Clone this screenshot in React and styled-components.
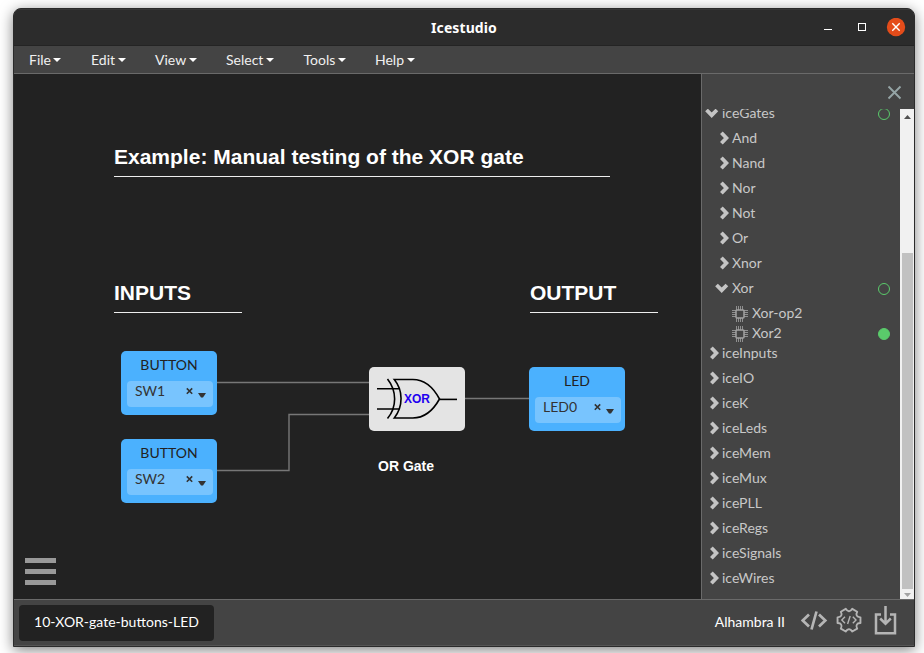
import React from "react";
import styled, { createGlobalStyle } from "styled-components";

const Global = createGlobalStyle`
  * { box-sizing: border-box; }
  html, body { margin: 0; height: 100%; background: #fff; overflow: hidden; }
  body { font-family: Lato, sans-serif; font-size: 14px; line-height: 20px; }
  svg { display: block; flex: none; }
`;

const Desktop = styled.div`
  width: 924px;
  height: 653px;
  padding: 8px 9px 6px 13px;
  overflow: hidden;
`;

const Window = styled.div`
  height: 639px;
  display: flex;
  flex-direction: column;
  border: 1px solid #2b2b2b;
  border-radius: 8px 8px 0 0;
  background: #444;
  box-shadow: 0 3px 14px rgba(0, 0, 0, 0.5);
  overflow: hidden;
`;

const TitleBar = styled.header`
  height: 37px;
  flex: none;
  display: grid;
  grid-template-columns: 1fr auto 1fr;
  align-items: center;
  background: #2c2c2c;
  border-top: 1px solid #383838;
  border-bottom: 1px solid #242424;
`;

const Title = styled.h1`
  grid-column: 2;
  margin: 0;
  font: bold 14px/20px "Noto Sans", sans-serif;
  letter-spacing: 0.1px;
  color: #fff;
`;

const WindowControls = styled.div`
  display: flex;
  justify-content: flex-end;
  padding-right: 8px;
`;

const MenuBar = styled.nav`
  height: 28px;
  flex: none;
  display: flex;
  align-items: center;
  gap: 30px;
  padding-left: 15px;
  background: #444;
  border-bottom: 1px solid #6a6a6a;
`;

const MenuItem = styled.div`
  display: flex;
  align-items: center;
  gap: 2.5px;
  width: ${(p) => p.$width}px;
  color: #f0f0f0;
  white-space: nowrap;
`;

const Body = styled.main`
  height: 525px;
  flex: none;
  display: flex;
`;

const Canvas = styled.section`
  position: relative;
  flex: 1;
  background: #222;
`;

const Wires = styled.svg`
  position: absolute;
  left: 0;
  top: 0;
`;

const Heading = styled.h2`
  position: absolute;
  left: ${(p) => p.$x}px;
  top: ${(p) => p.$y}px;
  width: ${(p) => p.$width}px;
  height: 34px;
  margin: 0;
  border-bottom: 1px solid #eee;
  font: bold 21px/28px "Liberation Sans", Arial, sans-serif;
  color: #fff;
  white-space: nowrap;
`;

const Caption = styled.div`
  position: absolute;
  left: 364px;
  top: 382px;
  font: bold 14px/20px "Liberation Sans", Arial, sans-serif;
  color: #fff;
`;

const Block = styled.div`
  position: absolute;
  left: ${(p) => p.$x}px;
  top: ${(p) => p.$y}px;
  width: 96px;
  height: 64px;
  border-radius: 5px;
  background: ${(p) => (p.$gate ? "#e4e4e4" : "#4bb1fe")};
`;

const BlockLabel = styled.div`
  height: 30px;
  padding-top: 4px;
  text-align: center;
  color: #222;
`;

const PinSelect = styled.div`
  height: 26px;
  margin: 0 4px 0 6px;
  padding: 0 6px 0 8px;
  display: flex;
  border-radius: 4px;
  background: #78c4fe;
  color: #333;
  line-height: 20px;
`;

const PinName = styled.span`
  flex: 1;
`;

const MenuButton = styled.div`
  position: absolute;
  left: 11px;
  bottom: 14px;
  width: 31px;
  display: grid;
  gap: 6px;
`;

const Bar = styled.span`
  height: 5px;
  background: #999;
`;

const Panel = styled.aside`
  width: 213px;
  flex: none;
  display: flex;
  flex-direction: column;
  background: #444;
  border-left: 1px solid #6a6a6a;
`;

const PanelHeader = styled.div`
  height: 35px;
  flex: none;
  display: flex;
  justify-content: flex-end;
  padding: 10.5px 12.5px 0 0;
`;

const TreeArea = styled.div`
  flex: 1;
  min-height: 0;
  display: flex;
`;

const TreeClip = styled.div`
  flex: 1;
  overflow: hidden;
`;

const Tree = styled.div`
  margin-top: -6px;
`;

const TreeRow = styled.div`
  height: 20px;
  margin-bottom: ${(p) => (p.$leaf ? 0 : 5)}px;
  padding-left: ${(p) => p.$depth * 10}px;
  padding-right: 10px;
  display: flex;
  align-items: center;
  color: #c8c8c8;
`;

const RowIcon = styled.span`
  width: 20px;
  flex: none;
  display: flex;
  justify-content: flex-end;
  padding-right: ${(p) => (p.$leaf ? 4 : 3)}px;
  padding-top: ${(p) => (p.$leaf ? 1 : 0)}px;
`;

const RowName = styled.span`
  flex: 1;
`;

const Dot = styled.span`
  width: 12px;
  height: 12px;
  margin-top: 2px;
  border: 1px solid #5acb6b;
  border-radius: 50%;
  background: ${(p) => (p.$filled ? "#5acb6b" : "transparent")};
`;

const ScrollTrack = styled.div`
  width: 14px;
  display: flex;
  flex-direction: column;
  align-items: center;
  background: #f1f1f1;
`;

const ScrollArrow = styled.div`
  height: ${(p) => p.$height}px;
  flex: none;
  display: flex;
  align-items: center;
`;

const ScrollThumb = styled.div`
  width: 11px;
  height: 336px;
  flex: none;
  margin-top: 129px;
  background: #c1c1c1;
`;

const Footer = styled.footer`
  height: 47px;
  flex: none;
  display: flex;
  padding: 5px 17px 0 5px;
  border-top: 1px solid #6a6a6a;
  border-bottom: 1px solid #555;
  background: #444;
  color: #fff;
`;

const ProjectTab = styled.div`
  width: 195px;
  height: 36px;
  border-radius: 4px;
  background: #222;
  text-align: center;
  line-height: 33px;
`;

const Board = styled.span`
  margin-left: auto;
  margin-right: 16px;
  line-height: 33px;
`;

const Tools = styled.div`
  display: flex;
`;

const MenuCaret = () => (
  <svg width="8" height="5" viewBox="0 0 8 5">
    <path d="M0 1h8L4 5z" fill="#fff" />
  </svg>
);

const Chevron = ({ open }) =>
  open ? (
    <svg width="14" height="12" viewBox="0 0 14 12">
      <path d="M1.500 3l5.200 5.200L11.900 3" fill="none" stroke="#c4c4c4" strokeWidth="3.800" />
    </svg>
  ) : (
    <svg width="9" height="14" viewBox="0 0 9 14">
      <path d="M1.400 1.800l5 5.200-5 5.200" fill="none" stroke="#c4c4c4" strokeWidth="3.800" />
    </svg>
  );

const Chip = () => (
  <svg width="16" height="16" viewBox="0 0 16 16" fill="none" stroke="#a2a2a2">
    <path d="M4.500 0v4M6.500 0v4M8.500 0v4M10.500 0v4M4.500 12v4M6.500 12v4M8.500 12v4M10.500 12v4M0 4.500h4M0 6.500h4M0 8.500h4M0 10.500h4M12 4.500h4M12 6.500h4M12 8.500h4M12 10.500h4" strokeWidth=".8" />
    <rect x="4" y="4" width="8" height="8" rx="1" strokeWidth="1.500" />
  </svg>
);

const PinMarks = () => (
  <svg width="22" height="26" viewBox="0 0 22 26">
    <path d="M1.800 7.400l5.400 5.400M7.200 7.400l-5.400 5.400" stroke="#333" strokeWidth="1.600" />
    <path d="M13 12h8l-3 4.500h-2z" fill="#333" />
  </svg>
);

const PinBlock = ({ x, y, label, pin }) => (
  <Block $x={x} $y={y}>
    <BlockLabel>{label}</BlockLabel>
    <PinSelect>
      <PinName>{pin}</PinName>
      <PinMarks />
    </PinSelect>
  </Block>
);

const gearPath = (cx, cy, outer, inner) => {
  const at = (r, deg) => {
    const a = (deg * Math.PI) / 180;
    return `${(cx + r * Math.cos(a)).toFixed(2)} ${(cy + r * Math.sin(a)).toFixed(2)}`;
  };
  const lobes = [0, 60, 120, 180, 240, 300].map(
    (d) => `${at(outer, d - 14)} L${at(outer, d + 14)} Q${at(inner, d + 19)} ${at(inner, d + 30)} Q${at(inner, d + 41)} `
  );
  return `M${lobes.join("")}${at(outer, -14)}Z`;
};

const menus = [
  ["File", 32],
  ["Edit", 34],
  ["View", 41],
  ["Select", 47.5],
  ["Tools", 41.5],
  ["Help", 40],
];

const tree = [
  { name: "iceGates", depth: 0, open: true, dot: "ring" },
  { name: "And", depth: 1 },
  { name: "Nand", depth: 1 },
  { name: "Nor", depth: 1 },
  { name: "Not", depth: 1 },
  { name: "Or", depth: 1 },
  { name: "Xnor", depth: 1 },
  { name: "Xor", depth: 1, open: true, dot: "ring" },
  { name: "Xor-op2", depth: 3, leaf: true },
  { name: "Xor2", depth: 3, leaf: true, dot: "filled" },
  ...["iceInputs", "iceIO", "iceK", "iceLeds", "iceMem", "iceMux", "icePLL", "iceRegs", "iceSignals", "iceWires"].map(
    (name) => ({ name, depth: 0 })
  ),
];

export default function App() {
  return (
    <Desktop>
      <Global />
      <Window>
        <TitleBar>
          <Title>Icestudio</Title>
          <WindowControls>
            <svg width="84" height="20" viewBox="0 0 84 20">
              <path d="M2 11.500h8" stroke="#fff" />
              <rect x="36.500" y="5.500" width="7" height="7" fill="none" stroke="#fff" />
              <circle cx="74" cy="9" r="9.200" fill="#e44c1a" />
              <path d="M70.300 5.300l7.400 7.400M77.700 5.300l-7.400 7.400" stroke="#fff" strokeWidth="1.400" />
            </svg>
          </WindowControls>
        </TitleBar>
        <MenuBar>
          {menus.map(([name, width]) => (
            <MenuItem key={name} $width={width}>
              {name}
              <MenuCaret />
            </MenuItem>
          ))}
        </MenuBar>
        <Body>
          <Canvas>
            <Wires width="687" height="525" viewBox="0 0 687 525" fill="none" stroke="#777" strokeWidth="1.400">
              <path d="M203 308.500h152M203 396.500h72v-56h80M451 324.500h64" />
            </Wires>
            <Heading $x={100} $y={69} $width={496}>Example: Manual testing of the XOR gate</Heading>
            <Heading $x={100} $y={205} $width={128}>INPUTS</Heading>
            <Heading $x={516} $y={205} $width={128}>OUTPUT</Heading>
            <PinBlock x={107} y={277} label="BUTTON" pin="SW1" />
            <PinBlock x={107} y={365} label="BUTTON" pin="SW2" />
            <PinBlock x={515} y={293} label="LED" pin="LED0" />
            <Block $gate $x={355} $y={293}>
              <svg width="96" height="64" viewBox="0 0 96 64" fill="none" stroke="#000" strokeWidth="1.600">
                <path d="M8 21.700h22M8 42h22" />
                <path d="M18.500 12c9.500 12 9.500 28 0 39.500" />
                <path d="M25.300 12.500c9 11 9 27 0 38.500h18.500c11 0 20-7 26.700-19-6.700-12.500-15.700-19.500-26.700-19.500z" />
                <path d="M70.500 32.400H88" />
                <text x="35" y="36" fill="#2200f0" stroke="none" fontFamily="Liberation Sans, Arial, sans-serif" fontSize="12" fontWeight="bold">XOR</text>
              </svg>
            </Block>
            <Caption>OR Gate</Caption>
            <MenuButton>
              <Bar />
              <Bar />
              <Bar />
            </MenuButton>
          </Canvas>
          <Panel>
            <PanelHeader>
              <svg width="15" height="15" viewBox="0 0 15 15">
                <path d="M1.500 1.500l12 12M13.500 1.500l-12 12" stroke="#95a5a6" strokeWidth="1.900" />
              </svg>
            </PanelHeader>
            <TreeArea>
              <TreeClip>
                <Tree>
                  {tree.map((row) => (
                    <TreeRow key={row.name} $depth={row.depth} $leaf={row.leaf}>
                      <RowIcon $leaf={row.leaf}>{row.leaf ? <Chip /> : <Chevron open={row.open} />}</RowIcon>
                      <RowName>{row.name}</RowName>
                      {row.dot && <Dot $filled={row.dot === "filled"} />}
                    </TreeRow>
                  ))}
                </Tree>
              </TreeClip>
              <ScrollTrack>
                <ScrollArrow $height={15}>
                  <svg width="7" height="4" viewBox="0 0 7 4">
                    <path d="M0 4h7L3.500 0z" fill="#505050" />
                  </svg>
                </ScrollArrow>
                <ScrollThumb />
                <ScrollArrow $height={12}>
                  <svg width="7" height="4" viewBox="0 0 7 4">
                    <path d="M0 0h7L3.500 4z" fill="#a3a3a3" />
                  </svg>
                </ScrollArrow>
              </ScrollTrack>
            </TreeArea>
          </Panel>
        </Body>
        <Footer>
          <ProjectTab>10-XOR-gate-buttons-LED</ProjectTab>
          <Board>Alhambra II</Board>
          <Tools>
            <svg width="96" height="36" viewBox="0.500 1 96 36" fill="none" stroke="#b5b5b5">
              <path d="M8.500 10.500l-6.300 6 6.300 6M18.500 10.500l6.300 6-6.300 6M16 7.500l-5 18" strokeWidth="2.700" />
              <path d={gearPath(48.500, 16.200, 11.800, 9)} strokeWidth="1.900" strokeLinejoin="round" />
              <path d="M44.500 12.800L41.300 16l3.200 3.200M52.300 12.800l3.200 3.200-3.200 3.200M49.700 12l-2.600 8" strokeWidth="1.400" />
              <path d="M80.500 10.500h-5v18.700h19V10.500h-5" strokeWidth="2.500" />
              <path d="M85 2v17M79.700 14.500l5.300 5.200 5.300-5.200" strokeWidth="2.500" />
            </svg>
          </Tools>
        </Footer>
      </Window>
    </Desktop>
  );
}
